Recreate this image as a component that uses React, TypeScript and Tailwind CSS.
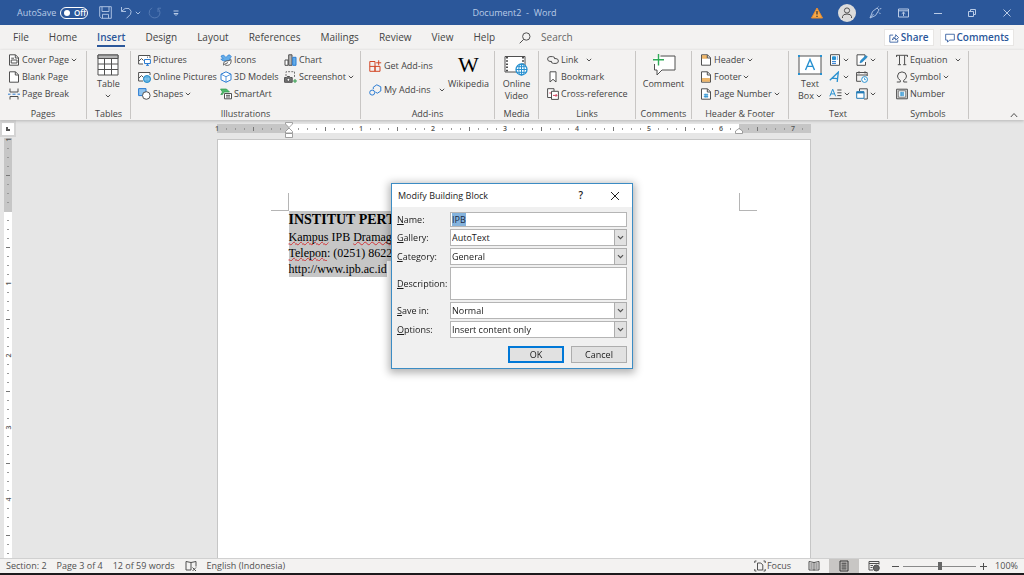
import { useEffect, useRef } from "react";
import type { ReactNode } from "react";

type IconProps = { children: ReactNode; className?: string; box?: string };

const Icon = ({ children, className = "size-3", box = "0 0 12 12" }: IconProps) => (
  <svg
    viewBox={box}
    className={`shrink-0 ${className}`}
    fill="none"
    stroke="#505050"
    strokeWidth="1"
    aria-hidden="true"
  >
    {children}
  </svg>
);

const Chevron = ({ className = "w-1.5 h-1" }: { className?: string }) => (
  <Icon className={className} box="0 0 6 4">
    <path d="M0.8 0.8 L3 3 L5.2 0.8" />
  </Icon>
);

/* ---------- ribbon icons ---------- */

const coverPage = (
  <Icon>
    <path d="M1.5 .8H7.5L10.5 3.8V11.2H1.5Z" fill="#fff" />
    <path d="M7.3 .8V4H10.5M3.2 4.2H6M3.2 6H9V9H3.2Z" />
  </Icon>
);
const blankPage = (
  <Icon>
    <path d="M1.5 .8H7.5L10.5 3.8V11.2H1.5Z" fill="#fff" />
    <path d="M7.3 .8V4H10.5" />
  </Icon>
);
const pageBreak = (
  <Icon>
    <path d="M2 .5V4H10V.5M2 11.5V8.5H10V11.5" />
    <path d="M0 6.2H2.5M4.5 6.2H7.5M9.5 6.2H12" stroke="#2b7cd3" />
  </Icon>
);
const tableIcon = (
  <Icon className="size-[22px]" box="0 0 22 22">
    <path d="M1 1H21V21H1Z" fill="#fff" />
    <path d="M1 1H21V4.5H1Z" fill="#b5b5b5" />
    <path d="M1 10H21M1 15.5H21M7.5 4.5V21M14.5 4.5V21" />
  </Icon>
);
const picture = (
  <Icon className="w-[13px] h-3" box="0 0 13 12">
    <path d="M5 10H.6V1.5H12V4" fill="#fff" />
    <path d="M1 7L3.5 4.5L5.5 6.5M9 3.2H10" />
    <path d="M6.5 5.5H12.4V9.5H6.5ZM8 11.3H11M9.5 9.5V11.3" stroke="#2b7cd3" fill="#fff" />
  </Icon>
);
const onlinePicture = (
  <Icon className="w-[13px] h-3" box="0 0 13 12">
    <path d="M5 10H.6V1.5H12V4" fill="#fff" />
    <path d="M1 7L3.5 4.5L5.5 6.5" />
    <circle cx="9" cy="8" r="3.5" stroke="#1a86c7" fill="#3aa0dc" />
    <path d="M5.7 8H12.3M9 4.6V11.4M7.2 5.5V10.5M10.8 5.5V10.5" stroke="#c8e6f7" strokeWidth=".5" />
  </Icon>
);
const shapes = (
  <Icon className="w-[13px] h-3" box="0 0 13 12">
    <path d="M.6 .6H8V7.6H.6Z" fill="#8fc3ee" stroke="#2b7cd3" />
    <circle cx="8.3" cy="7.5" r="3.8" fill="#fff" />
  </Icon>
);
const iconsIcon = (
  <Icon>
    <path d="M3.5 1L6 3.5L8 1.2Q10 .2 10.5 2L11.5 2.7L10.5 3.4Q10.5 7 6.5 7.2Q2.5 7.5 .8 5.2L3.3 4.6Q1.2 3.6 1 2Z" fill="#64ade8" stroke="#2b7cd3" strokeWidth=".7" />
    <path d="M3.5 11.4Q3 7.5 6 7Q9.5 7 11 5.5Q11.7 11 7.5 11.4Q5.5 11.5 4.5 10.4L8 8.5" fill="#fff" strokeWidth=".9" />
  </Icon>
);
const cube = (
  <Icon>
    <path d="M6 .8L11 3.2V8.8L6 11.3L1 8.8V3.2Z" fill="#fff" stroke="#2b7cd3" />
    <path d="M1 3.2L6 5.7L11 3.2M6 5.7V11" stroke="#2b7cd3" strokeWidth=".8" />
  </Icon>
);
const smartArt = (
  <Icon>
    <path d="M.5 1H6.5L9.5 4H4L2.5 6.5H.8L2.5 4Z" fill="#4fb96b" stroke="#2e9b4b" strokeWidth=".7" />
    <path d="M4.5 5.5H11.5V10.8H4.5ZM6 7.3H10M6 9H10" fill="#fff" />
  </Icon>
);
const chart = (
  <Icon className="w-[13px] h-3" box="0 0 13 12">
    <path d="M1 6H4V11.3H1Z" fill="#fff" />
    <path d="M4.7 .8H8V11.3H4.7Z" fill="#b5b5b5" />
    <path d="M8.7 3.3H12V11.3H8.7Z" fill="#64ade8" stroke="#2b7cd3" />
  </Icon>
);
const screenshot = (
  <Icon className="w-[13px] h-3" box="0 0 13 12">
    <path d="M2 5V.7H10.5V7" strokeDasharray="2 1.2" strokeWidth=".8" />
    <path d="M.6 6.5H2.5L3.3 5.5H5.5L6.3 6.5H8.2V11.3H.6Z" fill="#777" />
    <circle cx="4.4" cy="8.8" r="1.5" fill="#fff" />
    <path d="M11 8V12M9 10H13" stroke="#2e9b4b" />
  </Icon>
);
const getAddins = (
  <Icon className="w-[13px] h-3" box="0 0 13 12">
    <path d="M.8 1.5H6V11.3H.8ZM.8 6.4H11V11.3H6V6.4M9.7 .3V5.3M7.2 2.8H12.2" stroke="#d24726" />
  </Icon>
);
const myAddins = (
  <Icon className="w-[13px] h-3" box="0 0 13 12">
    <path d="M4.3 5.2V3.2L7.8 .8L11.8 2.8V7L8.4 9.2L6.3 8" stroke="#2b7cd3" />
    <circle cx="3.2" cy="8.6" r="2.5" stroke="#2b7cd3" />
  </Icon>
);
const videoIcon = (
  <Icon className="w-6 h-[22px]" box="0 0 24 22">
    <path d="M1 2.5H21V18H1Z" fill="#fff" />
    <path d="M3 3V17.5M19 3V10" strokeDasharray="1.5 1.7" stroke="#222" strokeWidth="1.6" />
    <circle cx="17.5" cy="15.5" r="5.5" fill="#fff" stroke="#2790d0" strokeWidth="1.3" />
    <path d="M12 15.5H23M17.5 10V21M13 12.7H22M13 18.3H22" stroke="#2790d0" />
    <ellipse cx="17.5" cy="15.5" rx="2.7" ry="5.5" stroke="#2790d0" />
  </Icon>
);
const linkIcon = (
  <Icon>
    <path d="M4.5 7.4H3Q.6 7.2.6 5T3 2.6H5.5Q8 2.8 8 5M7.5 4.6H9Q11.4 4.8 11.4 7T9 9.4H6.5Q4 9.2 4 7" />
  </Icon>
);
const bookmark = (
  <Icon>
    <path d="M3 .8H9V11L6 8.3L3 11Z" fill="#fff" />
  </Icon>
);
const crossRef = (
  <Icon>
    <path d="M4 9.5H.6V.7H7V3M4.5 3.3H11.4V11.4H4.5Z" fill="#fff" />
    <path d="M2.3 5H4M6 7.4H10M8.7 6L10 7.4L8.7 8.8" stroke="#d24762" />
  </Icon>
);
const commentIcon = (
  <Icon className="size-6" box="0 0 24 24">
    <path d="M2.5 5V17H6V22L11 17H23V4H8" fill="#fff" stroke="none" />
    <path d="M2.5 11V17H5V22L10 17H23V3H8.5" />
    <path d="M6.5 1V12.5M1 6.8H12" stroke="#2eab57" strokeWidth="1.4" />
  </Icon>
);
const headerIcon = (
  <Icon>
    <path d="M1.5 .8H7.5L10.5 3.8V11.2H1.5Z" fill="#fff" />
    <path d="M2.3 1.6H7V4.3H2.3Z" fill="#f0b86c" stroke="#e09c3c" strokeWidth=".6" />
    <path d="M7.3 .8V4H10.5" />
  </Icon>
);
const footerIcon = (
  <Icon>
    <path d="M1.5 .8H7.5L10.5 3.8V11.2H1.5Z" fill="#fff" />
    <path d="M2.3 7.5H9.7V10.3H2.3Z" fill="#f0b86c" stroke="#e09c3c" strokeWidth=".6" />
    <path d="M7.3 .8V4H10.5" />
  </Icon>
);
const pageNumberIcon = (
  <Icon>
    <path d="M1.5 .8H7.5L10.5 3.8V11.2H1.5Z" fill="#fff" />
    <path d="M7.3 .8V4H10.5" />
    <path d="M3.8 6.8H8.2M3.8 8.6H8.2M5.2 5.6V9.8M7 5.6V9.8" stroke="#2790d0" strokeWidth=".9" />
  </Icon>
);
const quickParts = (
  <Icon>
    <path d="M1.5 .7H10.5V11.3H1.5Z" fill="#fff" />
    <path d="M3.5 2.8H6.5V5.6H3.5Z" fill="#2790d0" stroke="#2790d0" />
    <path d="M7.8 3H9M7.8 5H9M3 7.6H7M3 9.4H7" stroke="#2b7cd3" />
  </Icon>
);
const wordArt = (
  <Icon>
    <path d="M.8 9.3L9.3 1.2L8.2 11M3.4 7.2L8.3 7.6" stroke="#2790d0" strokeWidth="1.3" />
  </Icon>
);
const dropCap = (
  <Icon className="w-[13px] h-3" box="0 0 13 12">
    <path d="M.8 8.3L3.7 1.2L6.6 8.3M1.9 5.9H5.6" stroke="#2790d0" />
    <path d="M8.3 2H12.5M8.3 4.8H12.5M8.3 7.6H12.5M.5 10.7H12.5" />
  </Icon>
);
const signature = (
  <Icon>
    <path d="M9 3V.8H1V11.3H9.5V8" fill="#fff" />
    <path d="M4 8.8L4.8 6.5L10 1.5L11.3 3L6.2 8Z" fill="#2790d0" stroke="#2179b5" strokeWidth=".7" />
  </Icon>
);
const dateTime = (
  <Icon>
    <path d="M5 10.3H.6V1.5H11.2V5M.6 4H11.2M3 .3V2.5M9 .3V2.5" />
    <circle cx="8.6" cy="8.5" r="2.9" fill="#fff" stroke="#2790d0" />
    <path d="M8.5 6.8V8.7H10.2" stroke="#2790d0" strokeWidth=".8" />
  </Icon>
);
const objectIcon = (
  <Icon>
    <path d="M3.5 3V.8H11.3V11H8" />
    <path d="M.7 3.7H8V10.3H.7Z" fill="#fff" stroke="#2179b5" />
    <path d="M.7 4.5H8" stroke="#2179b5" strokeWidth="1.8" />
  </Icon>
);
const textBoxIcon = (
  <Icon className="w-6 h-[22px]" box="0 0 24 22">
    <path d="M1 2H23V20H1Z" fill="#fff" />
    <path d="M7.5 16L12 5.5L16.5 16M9.2 12.4H14.8" stroke="#2790d0" strokeWidth="1.4" />
    <path d="M0 1H2V3H0ZM22 1H24V3H22ZM0 19H2V21H0ZM22 19H24V21H22Z" fill="#2790d0" stroke="none" />
  </Icon>
);
const equation = (
  <Icon>
    <path d="M.5 1.3H11.5M3.5 1.3V10.7M8.6 1.3V10.7M1.8 10.7H5M7.2 10.7H10.3M.6 1V3M11.4 1V3" />
  </Icon>
);
const omega = (
  <Icon>
    <path d="M.8 11H4.3V9.3Q1.5 7.8 1.5 5Q1.8 1 6 .9Q10.2 1 10.5 5Q10.5 7.8 7.7 9.3V11H11.2" />
  </Icon>
);
const numberIcon = (
  <Icon>
    <path d="M.6 1.2H11.4V10.8H.6Z" fill="#ddd" />
    <path d="M2.3 2.8H9.7V9.2H2.3Z" fill="#fff" strokeWidth=".7" />
    <path d="M3.8 5H8.2M3.8 7H8.2M5.2 3.8V8.2M7 3.8V8.2" stroke="#2790d0" strokeWidth=".9" />
  </Icon>
);

/* ---------- ribbon parts ---------- */

const Cmd = ({ icon, label, menu, far }: { icon: ReactNode; label: string; menu?: boolean; far?: boolean }) => (
  <button className="flex h-[17px] items-center gap-0.5 whitespace-nowrap">
    {icon}
    <span>{label}</span>
    {menu && <Chevron className={far ? "w-1.5 h-1 ml-1.5" : "w-1.5 h-1"} />}
  </button>
);

const BigCmd = ({ icon, children }: { icon: ReactNode; children: ReactNode }) => (
  <button className="flex flex-col items-center gap-0.5 pt-0.5 leading-3">
    <span className="flex h-[23px] items-center">{icon}</span>
    {children}
  </button>
);

const Group = ({ name, width, children }: { name: string; width: string; children: ReactNode }) => (
  <section className={`flex h-[68px] shrink-0 flex-col justify-between border-r border-[#c8c6c4] ${width}`}>
    <div className="flex">{children}</div>
    <h2 className="text-center leading-[11px] whitespace-nowrap">{name}</h2>
  </section>
);

const IconCmd = ({ icon, label, menu = true }: { icon: ReactNode; label: string; menu?: boolean }) => (
  <button aria-label={label} className="flex h-[17px] items-center gap-0.5">
    {icon}
    {menu && <Chevron />}
  </button>
);

const tabs = ["File", "Home", "Insert", "Design", "Layout", "References", "Mailings", "Review", "View", "Help"];

const TitleBar = () => (
  <header className="flex h-[25px] shrink-0 items-center bg-[#2b579a] text-[9px] text-[#b9cbe6]">
    <div className="flex flex-1 items-center pl-[17px]">
      <span className="w-[43px]">AutoSave</span>
      <button className="flex h-3 w-7 items-center gap-1 rounded-full border border-white pl-[3px] text-[8px] font-semibold text-white">
        <span className="size-1.5 rounded-full bg-white" />
        Off
      </button>
      <button aria-label="Save" className="ml-[11px]">
        <Icon className="size-[13px]" box="0 0 13 13">
          <path d="M.7 .7H12.3V12.3H2.5L.7 10.5ZM3 .7V5.5H10V.7M3.5 12.3V8.3H9.5V12.3" stroke="#a9bfe0" />
        </Icon>
      </button>
      <button aria-label="Undo" className="ml-2 flex items-center gap-0.5">
        <Icon className="size-[13px]" box="0 0 13 13">
          <path d="M1.5 1V5.5H6M1.7 5.2Q5 1 9 2.5Q12.5 5 10.5 8.3L6.5 12.3" stroke="#a9bfe0" />
        </Icon>
        <Icon className="h-1 w-1.5" box="0 0 6 4">
          <path d="M.8 .8L3 3L5.2 .8" stroke="#a9bfe0" />
        </Icon>
      </button>
      <button aria-label="Repeat" className="ml-[7px]">
        <Icon className="size-[13px]" box="0 0 13 13">
          <path d="M4 1.8Q.6 4 1.2 7.5Q2.5 11.8 6.8 11.9Q11.5 11.5 12 6.8Q12 4.3 10 2.5M10 6V2.2H13" stroke="#5379b3" />
        </Icon>
      </button>
      <button aria-label="Customize toolbar" className="ml-3">
        <Icon className="h-2 w-1.5" box="0 0 6 8">
          <path d="M.5 2H5.5M1 4.5L3 6.5L5 4.5Z" stroke="#b9cbe6" />
        </Icon>
      </button>
    </div>
    <h1 className="whitespace-pre">Document2  -  Word</h1>
    <div className="flex flex-1 items-center justify-end pr-3">
      <Icon className="size-3">
        <path d="M6 1L11.5 11H.5Z" fill="#f5a94a" stroke="#e98b2b" />
        <path d="M6 4V7.5M6 8.7V10" stroke="#333" strokeWidth="1.2" />
      </Icon>
      <button aria-label="Account" className="ml-[15px]">
        <Icon className="size-[18px]" box="0 0 18 18">
          <circle cx="9" cy="9" r="9" fill="#dcdcdc" stroke="none" />
          <circle cx="9" cy="6.5" r="2.6" />
          <path d="M4.5 14V12.5Q5 10 9 10T13.5 12.5V14" />
        </Icon>
      </button>
      <button aria-label="Ink" className="ml-[13px]">
        <Icon className="size-[13px]" box="0 0 13 13">
          <path d="M1 12L3.5 5.5L8 2L10 4L6.5 9.5ZM1 12L4.5 8M8.5 1.5L9.5 .7M10.5 3L12.3 2.5M10 6.5L11.5 8" stroke="#a9bfe0" />
        </Icon>
      </button>
      <button aria-label="Ribbon display options" className="ml-4">
        <Icon className="h-2.5 w-[11px]" box="0 0 11 10">
          <path d="M.5 1H10.5V9H.5ZM.5 2.8H10.5M5.5 8V4.2M3.7 5.8L5.5 4.2L7.3 5.8" stroke="#b9cbe6" />
        </Icon>
      </button>
      <button aria-label="Minimize" className="ml-[25px]">
        <Icon className="size-2" box="0 0 8 8">
          <path d="M0 4.5H8" stroke="#b9cbe6" />
        </Icon>
      </button>
      <button aria-label="Restore" className="ml-[26px]">
        <Icon className="size-2" box="0 0 8 8">
          <path d="M.5 2.5H5.5V7.5H.5ZM2.5 2.5V.5H7.5V5.5H5.5" stroke="#b9cbe6" />
        </Icon>
      </button>
      <button aria-label="Close" className="ml-[26px]">
        <Icon className="size-2.5" box="0 0 10 10">
          <path d="M1.5 1.5L8.5 8.5M8.5 1.5L1.5 8.5" stroke="#b9cbe6" />
        </Icon>
      </button>
    </div>
  </header>
);

const TabRow = () => (
  <nav className="flex h-[25px] shrink-0 items-center bg-[#f3f2f1] pr-2.5 pl-[13px] text-[10px] text-[#444]">
    <div className="flex gap-5">
      {tabs.map((tab) => (
        <button
          key={tab}
          className={
            tab === "Insert"
              ? "border-b-2 border-[#2b579a] font-semibold leading-4 text-[#2b579a]"
              : "border-b-2 border-transparent leading-4"
          }
        >
          {tab}
        </button>
      ))}
    </div>
    <button className="ml-6 flex flex-1 items-center gap-2.5 text-[#666]">
      <Icon>
        <circle cx="7.3" cy="4.5" r="3.7" />
        <path d="M4.7 7.3L.7 11.3" />
      </Icon>
      Search
    </button>
    <div className="flex gap-1.5 font-semibold text-[#2b579a]">
      <button className="flex h-[17px] items-center gap-0.5 border border-[#e8e6e4] bg-white px-1">
        <Icon className="size-2.5">
          <path d="M5 2.5H1V11H10.5V8M4 8.5Q4.5 4.5 8 4.5V2L11.5 5.5L8 8.5V6.3Q5.5 6 4 8.5Z" stroke="#2b579a" />
        </Icon>
        Share
      </button>
      <button className="flex h-[17px] items-center gap-0.5 border border-[#e8e6e4] bg-white px-1">
        <Icon className="size-2.5">
          <path d="M.8 1.5H11.2V8.5H5.5L3 11V8.5H.8Z" stroke="#2b579a" />
        </Icon>
        Comments
      </button>
    </div>
  </nav>
);

const Ribbon = () => (
  <div className="z-10 flex h-[70px] shrink-0 bg-[#f3f2f1] pt-px text-[9px] text-[#444] shadow-[0_1px_3px_#b5b5b5]">
    <Group name="Pages" width="w-[87px]">
      <div className="flex flex-col pl-2">
        <Cmd icon={coverPage} label="Cover Page" menu />
        <Cmd icon={blankPage} label="Blank Page" />
        <Cmd icon={pageBreak} label="Page Break" />
      </div>
    </Group>
    <Group name="Tables" width="w-11">
      <div className="flex flex-1 justify-center">
        <BigCmd icon={tableIcon}>
          <span>Table</span>
          <span className="flex h-2 items-center"><Chevron /></span>
        </BigCmd>
      </div>
    </Group>
    <Group name="Illustrations" width="w-[230px]">
      <div className="flex w-[89px] flex-col pl-[7px]">
        <Cmd icon={picture} label="Pictures" />
        <Cmd icon={onlinePicture} label="Online Pictures" />
        <Cmd icon={shapes} label="Shapes" menu />
      </div>
      <div className="flex w-16 flex-col">
        <Cmd icon={iconsIcon} label="Icons" />
        <Cmd icon={cube} label="3D Models" />
        <Cmd icon={smartArt} label="SmartArt" />
      </div>
      <div className="flex flex-col">
        <Cmd icon={chart} label="Chart" />
        <Cmd icon={screenshot} label="Screenshot" menu />
      </div>
    </Group>
    <Group name="Add-ins" width="w-[134px]">
      <div className="flex w-[87px] flex-col gap-[7px] pt-1.5 pl-2">
        <Cmd icon={getAddins} label="Get Add-ins" />
        <Cmd icon={myAddins} label="My Add-ins" menu far />
      </div>
      <BigCmd icon={<span className="font-['Liberation_Serif',serif] text-[22px] text-black">W</span>}>
        <span>Wikipedia</span>
      </BigCmd>
    </Group>
    <Group name="Media" width="w-11">
      <div className="flex flex-1 justify-center">
        <BigCmd icon={videoIcon}>
          <span>Online<br />Video</span>
        </BigCmd>
      </div>
    </Group>
    <Group name="Links" width="w-[97px]">
      <div className="flex flex-col pl-2">
        <Cmd icon={linkIcon} label="Link" menu far />
        <Cmd icon={bookmark} label="Bookmark" />
        <Cmd icon={crossRef} label="Cross-reference" />
      </div>
    </Group>
    <Group name="Comments" width="w-14">
      <div className="flex flex-1 justify-center">
        <BigCmd icon={commentIcon}>
          <span>Comment</span>
        </BigCmd>
      </div>
    </Group>
    <Group name="Header & Footer" width="w-[97px]">
      <div className="flex flex-col pl-2">
        <Cmd icon={headerIcon} label="Header" menu />
        <Cmd icon={footerIcon} label="Footer" menu />
        <Cmd icon={pageNumberIcon} label="Page Number" menu />
      </div>
    </Group>
    <Group name="Text" width="w-[99px]">
      <div className="flex w-10 justify-center pl-0.5">
        <BigCmd icon={textBoxIcon}>
          <span>
            Text<br />
            <span className="flex items-center gap-0.5">Box <Chevron /></span>
          </span>
        </BigCmd>
      </div>
      <div className="flex w-[27px] flex-col">
        <IconCmd icon={quickParts} label="Quick Parts" />
        <IconCmd icon={wordArt} label="WordArt" />
        <IconCmd icon={dropCap} label="Drop Cap" />
      </div>
      <div className="flex flex-col">
        <IconCmd icon={signature} label="Signature Line" />
        <IconCmd icon={dateTime} label="Date and Time" menu={false} />
        <IconCmd icon={objectIcon} label="Object" />
      </div>
    </Group>
    <Group name="Symbols" width="w-[81px]">
      <div className="flex flex-col pl-2">
        <Cmd icon={equation} label="Equation" menu far />
        <Cmd icon={omega} label="Symbol" menu />
        <Cmd icon={numberIcon} label="Number" />
      </div>
    </Group>
    <button aria-label="Collapse the ribbon" className="ml-auto self-end pr-1.5 pb-0.5">
      <Icon className="h-1.5 w-2" box="0 0 8 6">
        <path d="M.8 5L4 1.5L7.2 5" />
      </Icon>
    </button>
  </div>
);

/* ---------- rulers, one mark every 1/8 inch ---------- */

const mark = (i: number, vertical: boolean) => {
  const n = i - 8;
  if (n === 0) return null;
  if (n % 8 === 0) return <span className={vertical ? "-rotate-90" : ""}>{Math.abs(n / 8)}</span>;
  if (n % 4 === 0) return <span className={vertical ? "h-px w-1 bg-[#777]" : "h-1 w-px bg-[#777]"} />;
  return <span className={vertical ? "h-px w-0.5 bg-[#999]" : "h-0.5 w-px bg-[#999]"} />;
};

const HorizontalRuler = () => (
  <div className="grid h-[9px] w-[594px] text-[7px] font-semibold leading-[9px] text-[#555]">
    <div className="col-start-1 row-start-1 flex">
      <span className="w-[72px] bg-[#c6c6c6]" />
      <span className="w-[450px] bg-white" />
      <span className="flex-1 bg-[#c6c6c6]" />
    </div>
    <div className="col-start-1 row-start-1 -ml-1 flex">
      {Array.from({ length: 66 }, (_, i) => (
        <span key={i} className="flex h-[9px] w-[9px] shrink-0 items-center justify-center">
          {mark(i, false)}
        </span>
      ))}
    </div>
    <div className="relative col-start-1 row-start-1">
      <Icon className="absolute -top-0.5 left-[68px] h-4 w-2" box="0 0 8 16">
        <path d="M.5 .5H7.5V2L4 5.5L.5 2ZM4 6L7.5 9.5V11H.5V9.5ZM.5 11.5H7.5V15.5H.5Z" fill="#fff" stroke="#8a8a8a" strokeWidth=".8" />
      </Icon>
      <Icon className="absolute top-1 left-[518px] h-1.5 w-2" box="0 0 8 6">
        <path d="M4 .5L7.5 3V5.5H.5V3Z" fill="#fff" stroke="#8a8a8a" strokeWidth=".8" />
      </Icon>
    </div>
  </div>
);

const VerticalRuler = () => (
  <div className="flex w-[17px] shrink-0 flex-col">
    <div className="flex h-[17px] w-4 shrink-0 items-center justify-center bg-[#d4d4d4]">
      <span className="flex size-3 items-center justify-center bg-white">
        <span className="size-1 border-b-2 border-l-2 border-[#555]" />
      </span>
    </div>
    <div className="mt-px ml-1 grid w-2 flex-1 text-[7px] font-semibold leading-[9px] text-[#555]">
      <div className="col-start-1 row-start-1 flex flex-col">
        <span className="h-[74px] bg-[#c6c6c6]" />
        <span className="flex-1 bg-white" />
      </div>
      <div className="col-start-1 row-start-1 -mt-1 flex h-0 flex-col pt-px">
        {Array.from({ length: 47 }, (_, i) => (
          <span key={i} className="flex h-[9px] w-2 shrink-0 items-center justify-center">
            {mark(i, true)}
          </span>
        ))}
      </div>
    </div>
  </div>
);

const typo =
  "underline decoration-wavy decoration-[#d13438] decoration-1 underline-offset-0 [text-decoration-skip-ink:none]";

const Document = () => (
  <main className="flex flex-1 flex-col items-center pt-1 pr-3.5">
    <HorizontalRuler />
    <article className="mt-1.5 flex w-[594px] flex-1 flex-col border border-b-0 border-[#c6c6c6] bg-white pt-[53px]">
      <div className="flex justify-between px-[53px]">
        <span className="size-[18px] border-r border-b border-[#b5b5b5]" />
        <span className="size-[18px] border-b border-l border-[#b5b5b5]" />
      </div>
      <div className="ml-[71px] w-40 font-['Liberation_Serif',serif] text-[12px] leading-4 whitespace-nowrap text-black">
        <p className="bg-[#c6c6c6] text-[14px] leading-[18px] font-bold">INSTITUT PERT</p>
        <p className="bg-[#c6c6c6]"><span className={typo}>Kampus</span> IPB <span className={typo}>Dramaga</span></p>
        <p className="bg-[#c6c6c6]"><span className={typo}>Telepon</span>: (0251) 8622</p>
        <p className="flex"><span className="bg-[#c6c6c6]">http://www.ipb.ac.id</span></p>
      </div>
    </article>
  </main>
);

/* ---------- dialog ---------- */

const Label = ({ id, children }: { id: string; children: string }) => (
  <label htmlFor={id} className="self-center">
    <u>{children[0]}</u>
    {children.slice(1)}
  </label>
);

const Select = ({ id, value }: { id: string; value: string }) => (
  <div className="relative flex h-[17px]">
    <select id={id} className="w-full appearance-none border border-[#b5b5b5] bg-white pl-px leading-[15px] outline-none">
      <option>{value}</option>
    </select>
    <span className="pointer-events-none absolute inset-y-0 right-0 flex w-[13px] items-center justify-center border border-[#adadad] bg-[#e1e1e1]">
      <Chevron className="h-[5px] w-[7px]" />
    </span>
  </div>
);

const BuildingBlockDialog = () => {
  const nameRef = useRef<HTMLInputElement>(null);

  useEffect(() => {
    nameRef.current?.focus();
    nameRef.current?.select();
  }, []);

  return (
    <div
      role="dialog"
      aria-labelledby="dialog-title"
      className="fixed inset-x-0 top-[183px] z-20 mx-auto w-[242px] border border-[#3c8cc4] bg-[#f0f0f0] text-[9px] text-[#1a1a1a] shadow-[0_2px_8px_2px_rgba(0,0,0,0.3)]"
    >
      <div className="flex h-[23px] items-center bg-white pr-3 pl-1.5">
        <h2 id="dialog-title" className="flex-1">Modify Building Block</h2>
        <button aria-label="Help" className="mr-[27px] text-[10px] font-semibold">?</button>
        <button aria-label="Close dialog">
          <Icon className="size-2.5" box="0 0 10 10">
            <path d="M1 1L9 9M9 1L1 9" stroke="#222" />
          </Icon>
        </button>
      </div>
      <form className="px-[5px] pt-[5px] pb-[5px]" onSubmit={(e) => e.preventDefault()}>
        <div className="grid grid-cols-[52px_1fr] gap-x-px gap-y-0.5">
          <Label id="name">Name:</Label>
          <input
            id="name"
            ref={nameRef}
            defaultValue="IPB"
            className="h-[15px] border border-[#b5b5b5] bg-white px-px outline-none selection:bg-[#84b3dd] selection:text-[#1a2a44]"
          />
          <Label id="gallery">Gallery:</Label>
          <Select id="gallery" value="AutoText" />
          <Label id="category">Category:</Label>
          <Select id="category" value="General" />
          <Label id="description">Description:</Label>
          <textarea id="description" className="h-[33px] resize-none border border-[#b5b5b5] bg-white outline-none" />
          <Label id="save-in">Save in:</Label>
          <Select id="save-in" value="Normal" />
          <Label id="options">Options:</Label>
          <Select id="options" value="Insert content only" />
        </div>
        <div className="mt-2 flex justify-end gap-[7px]">
          <button type="submit" className="h-[17px] w-14 border-2 border-[#0078d7] bg-[#e1e1e1]">OK</button>
          <button type="button" className="h-[17px] w-14 border border-[#adadad] bg-[#e1e1e1]">Cancel</button>
        </div>
      </form>
    </div>
  );
};

const StatusBar = () => (
  <footer className="flex h-[17px] shrink-0 items-center border-t border-b-2 border-t-[#d0d0d0] border-b-[#1c1a1c] bg-[#f3f2f1] pr-1.5 pl-1.5 text-[9px] text-[#505050]">
    <div className="flex flex-1 items-center gap-2.5">
      <span>Section: 2</span>
      <span>Page 3 of 4</span>
      <span>12 of 59 words</span>
      <button aria-label="Proofing">
        <Icon>
          <path d="M6 2.5L1 1.5V10H6M6 2.5L11 1.5V6.5M6 2.5V10M7.5 7.5L11 11M11 7.5L7.5 11" />
        </Icon>
      </button>
      <span>English (Indonesia)</span>
    </div>
    <button className="flex items-center gap-px">
      <Icon>
        <path d="M3.5 3H6.8L8.8 5V10H3.5ZM.8 3V1H2.5M.8 9V11H2.5M9.5 1H11.2V3M11.2 9V11H9.5" />
      </Icon>
      Focus
    </button>
    <button aria-label="Read mode" className="mr-[9px] ml-[17px]">
      <Icon>
        <path d="M6 2.5L1 1.5V10H6L11 10V1.5L6 2.5V10.5M2.3 4H4.7M2.3 6H4.7M2.3 8H4.7M7.3 4H9.7M7.3 6H9.7M7.3 8H9.7" />
      </Icon>
    </button>
    <button aria-label="Print layout" className="flex w-[30px] items-center justify-center self-stretch bg-[#c8c6c4]">
      <Icon>
        <path d="M2 1H10V11H2ZM3.5 3.2H8.5M3.5 5.1H8.5M3.5 7H8.5M3.5 8.9H8.5" stroke="#333" />
      </Icon>
    </button>
    <button aria-label="Web layout" className="ml-[9px]">
      <Icon>
        <path d="M5 10H1V1.5H11V4.5M1 3.5H11M2.5 5.5H5M2.5 7.5H4.5" />
        <circle cx="8.3" cy="8" r="3" fill="#666" />
      </Icon>
    </button>
    <div className="ml-3 flex items-center gap-1">
      <button aria-label="Zoom out">
        <Icon className="size-[7px]" box="0 0 7 7"><path d="M0 3.5H7" /></Icon>
      </button>
      <input
        type="range"
        aria-label="Zoom"
        defaultValue={50}
        className="h-px w-[73px] appearance-none bg-[#8a8a8a] [&::-webkit-slider-thumb]:h-2 [&::-webkit-slider-thumb]:w-1 [&::-webkit-slider-thumb]:appearance-none [&::-webkit-slider-thumb]:bg-[#666]"
      />
      <button aria-label="Zoom in">
        <Icon className="size-[7px]" box="0 0 7 7"><path d="M0 3.5H7M3.5 0V7" /></Icon>
      </button>
    </div>
    <span className="ml-2">100%</span>
  </footer>
);

const App = () => (
  <div className="flex h-screen flex-col overflow-hidden bg-[#e6e6e6] font-['Open_Sans','Noto_Sans',sans-serif]">
    <TitleBar />
    <TabRow />
    <Ribbon />
    <div className="flex min-h-0 flex-1">
      <VerticalRuler />
      <Document />
    </div>
    <StatusBar />
    <BuildingBlockDialog />
  </div>
);

export default App;
